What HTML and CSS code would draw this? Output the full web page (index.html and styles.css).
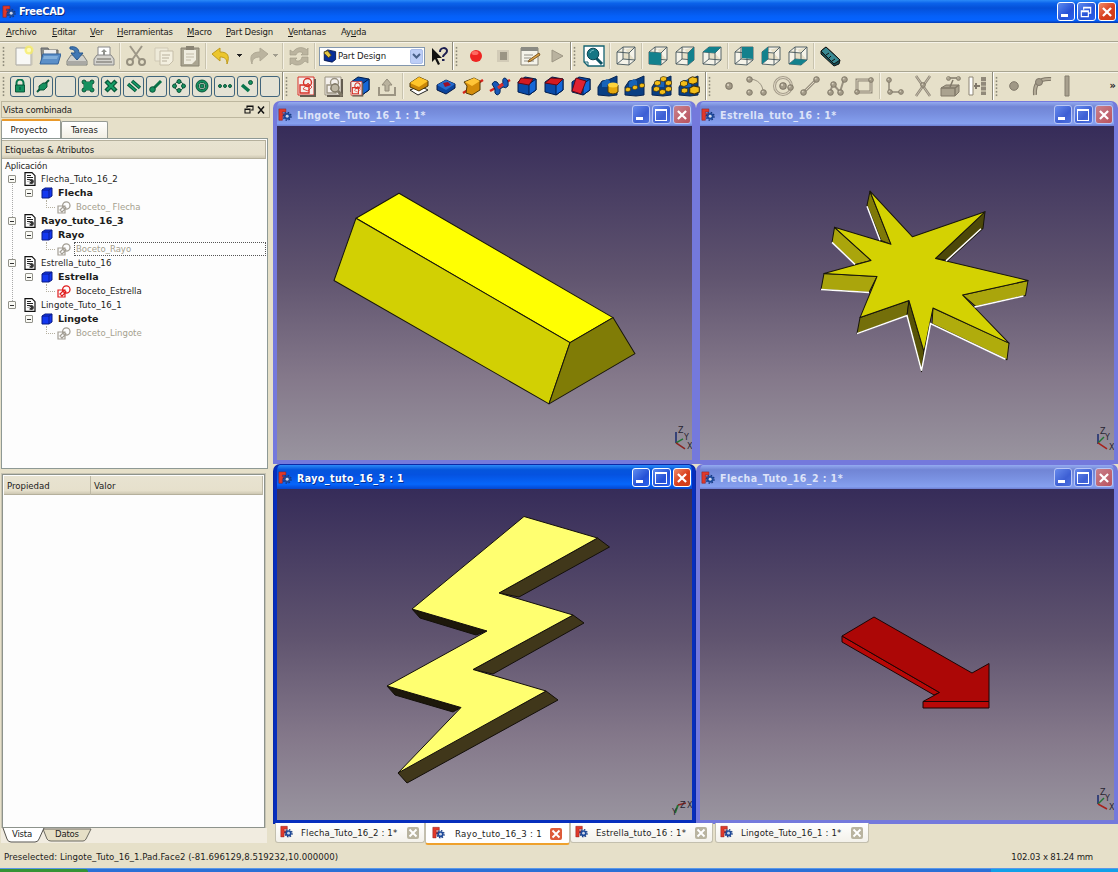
FILE: index.html
```html
<!DOCTYPE html>
<html lang="es">
<head>
<meta charset="utf-8">
<title>FreeCAD</title>
<link rel="stylesheet" href="styles.css">
</head>
<body>
<svg class="defs" width="0" height="0">
  <defs>
    <linearGradient id="sky" x1="0" y1="0" x2="0" y2="1">
      <stop offset="0" stop-color="#362c59"/><stop offset=".45" stop-color="#60546f"/><stop offset=".75" stop-color="#84788a"/><stop offset="1" stop-color="#99949f"/>
    </linearGradient>
    <symbol id="fc" viewBox="0 0 16 16"><path d="M1 1h8v3.500H5v2h3v3H5V14H1z" fill="#e0392a" stroke="#8b2020" stroke-width=".6"/><circle cx="10.500" cy="9.500" r="3.800" fill="#1c4a9c"/><circle cx="10.500" cy="9.500" r="4.400" fill="none" stroke="#173a80" stroke-width="1.600" stroke-dasharray="1.800 1.650"/><circle cx="10.500" cy="9.500" r="1.700" fill="#cdd5e8"/></symbol>
    <symbol id="wire" viewBox="0 0 22 22"><path d="M2 7 8 2h12v13l-6 5-12-1zM2 7l12 1 6-6M14 8v12M8 2v12l12 1M8 14l-6 5" fill="#fff" fill-opacity=".6" stroke="#45565b" stroke-width=".9"/></symbol>
    <symbol id="doc" viewBox="0 0 12 14"><path d="M1 .7h7l3 3v9.600H1z" fill="#fff" stroke="#111" stroke-width="1.200"/><path d="M3 3.500h4M3 5.500h6M3 7.500h3" stroke="#222"/><circle cx="7.300" cy="9.500" r="2.500" fill="#333"/><path d="M3 9.500h4M5.500 8v3" stroke="#bbb"/></symbol>
    <symbol id="box" viewBox="0 0 12 12"><path d="M1 3 4 1h7v8l-3 2H1z" fill="#1438f0" stroke="#091a83"/><path d="M1 3h7l3-2M8 3v8" fill="none" stroke="#091a83" stroke-width=".9"/></symbol>
    <symbol id="sk" viewBox="0 0 14 13"><path d="M1 5h7v7H1zM3 9l4-4 2 2-4 4z" fill="none" stroke="currentColor" stroke-width="1.200"/><circle cx="9.300" cy="4.500" r="3.700" fill="none" stroke="currentColor" stroke-width="1.300"/></symbol>
    <symbol id="solid" viewBox="0 0 22 22"><path d="M2 7 9 2l11 2v11l-7 5-11-3z" fill="#0a4ba8" stroke="#001c4c"/><path d="m13 9 7-5v11l-7 5z" fill="#1467d8" stroke="#001c4c"/></symbol>
    <symbol id="pat" viewBox="0 0 22 22"><path d="m1 12 4-6 6-1 9-4v19l-8 1-11-1z" fill="#093f83" stroke="#062454"/><path d="m5 7 5-3 3 2v6H5z" fill="#1763b8"/></symbol>
    <symbol id="sheet" viewBox="0 0 22 22"><path d="M3 2h16v18H3z" fill="#f4f0ec" stroke="currentColor"/><path d="M20 4v17H5" fill="none" stroke="#635c50" stroke-width="2"/><path d="M5 10h9v8H5z" fill="none" stroke="currentColor" stroke-width="1.400"/><path d="m8 14 5-6 4 4-4 4z" fill="none" stroke="currentColor" stroke-width=".8"/><circle cx="12.500" cy="7.500" r="4" fill="none" stroke="currentColor" stroke-width="1.400"/></symbol>
    <symbol id="dot" viewBox="0 0 6 6"><circle cx="3" cy="3" r="2.400" fill="#a39b88" stroke="#7d7565" stroke-width=".8"/><circle cx="2.300" cy="2.200" r=".8" fill="#d8d0bd"/></symbol>
    <symbol id="lemon" viewBox="0 0 8 7"><path d="m.5 2 3-1.500 4 1V5L4 6.500l-3.500-1z" fill="#f3bd17" stroke="#41310a" stroke-width=".8"/></symbol>
    <symbol id="x" viewBox="0 0 12 12"><path d="m2.500 2.500 7 7m0-7-7 7" stroke="#fff" stroke-width="1.900"/></symbol>
  </defs>
</svg>

<header class="title"><svg class="logo"><use href="#fc"/></svg><b>FreeCAD</b>
  <div class="wbtns"><i class="wb min"></i><i class="wb"><svg viewBox="0 0 12 12"><path d="M4 4V2h6v5H8M2 5h6v5H2zM2 5.800h6M4 2.500h6" fill="none" stroke="#fff" stroke-width="1"/></svg></i><i class="wb red"><svg><use href="#x"/></svg></i></div>
</header>

<nav class="menu"><span class="m1"><u>A</u>rchivo</span><span class="m2"><u>E</u>ditar</span><span class="m3"><u>V</u>er</span><span class="m4"><u>H</u>erramientas</span><span class="m5"><u>M</u>acro</span><span class="m6"><u>P</u>art Design</span><span class="m7"><u>V</u>entanas</span><span class="m8">Ay<u>u</u>da</span></nav>

<div class="bar bar1">
  <i class="grip"></i>
  <svg class="ic" viewBox="0 0 22 22"><path d="M4 3h15v17H4z" fill="#f8f8f6" stroke="#aaa9a3"/><path d="M5 20h15V6" fill="none" stroke="#c6c2b7"/><circle cx="17" cy="5" r="4.500" fill="#f7ee67" opacity=".8"/><circle cx="17" cy="5" r="2.200" fill="#fffbb8"/></svg>
  <svg class="ic" viewBox="0 0 22 22"><path d="M2 3h7l1 2h9v13H3z" fill="#8a8c88" stroke="#64676a"/><path d="M5 5h12v6H5z" fill="#eee"/><path d="M4 9h18l-3 10H1z" fill="#5b8fc8" stroke="#32629c"/><path d="M5 11h14l-1 3H4z" fill="#82afdb"/></svg>
  <svg class="ic" viewBox="0 0 22 22"><path d="m5 10-4 6v4h20v-4l-4-6z" fill="#d0d0cb" stroke="#7d7e79"/><path d="M2 16h18v3H2z" fill="#aaa9a4"/><path d="M4 2c5-1 9 1 9 6h4l-6 7-6-7h4c0-3-2-4-5-4z" fill="#4178b4" stroke="#27578e"/></svg>
  <svg class="ic" viewBox="0 0 22 22"><path d="M5 2h12v9H5z" fill="#fff" stroke="#888"/><path d="m11 4 3 3h-2v3h-2V7H8z" fill="#90928d"/><path d="m4 10-3 4v6h20v-6l-3-4z" fill="#d4d3ce" stroke="#888"/><path d="M4 14h14M3 17h16" stroke="#8d8c85" stroke-width="1.500"/></svg>
  <i class="sep"></i>
  <svg class="ic" viewBox="0 0 22 22" fill="none" stroke="#96907f"><path d="m5 1 10 14M17 1 7 15" stroke="#9d9787" stroke-width="2"/><circle cx="5" cy="17" r="3" stroke-width="2"/><circle cx="17" cy="17" r="3" stroke-width="2"/></svg>
  <svg class="ic" viewBox="0 0 22 22"><path d="M3 3h13v13H3z" fill="#eeead9" stroke="#d0c9b5"/><path d="M8 6h13v10l-4 4H8z" fill="#f3efdf" stroke="#c5bda8"/><path d="M10 10h8m-8 3h7m-7 3h5" stroke="#b7af9c"/></svg>
  <svg class="ic" viewBox="0 0 22 22"><path d="M2 3h18v18H2z" fill="#aaa592" stroke="#8a8472"/><path d="M5 5h12v14H5z" fill="#efecdf"/><path d="M7 1h8v4H7z" fill="#8a8474"/><path d="M7 9h8m-8 3h8m-8 3h5" stroke="#c2bba8"/><path d="m13 19 4-4v4z" fill="#aaa38f"/></svg>
  <i class="sep"></i>
  <svg class="ic" viewBox="0 0 22 22"><path d="m1 9 8-6v4c8 0 10 4 7 12 0-5-2-7-7-7v4z" fill="#ecc62d" stroke="#bf9b1d"/></svg>
  <i class="caret"></i>
  <svg class="ic" viewBox="0 0 22 22"><path d="m21 9-8-6v4C5 7 2 11 5 19c0-5 3-7 8-7v4z" fill="#bbb49f" stroke="#b0a995"/></svg>
  <i class="caret off"></i>
  <i class="sep"></i>
  <svg class="ic" viewBox="0 0 22 22"><path d="M2 10V5l3 2c4-6 11-5 14-2l1-2v7h-7l2-2c-3-2-6-1-7 2zm18 2v6l-3-2c-4 5-10 5-13 2l-2 2v-7h7l-2 2c3 2 6 1 7-3z" fill="#bbb49f" stroke="#a49d8a" stroke-width=".7"/></svg>
  <i class="sep"></i>
  <div class="combo"><svg viewBox="0 0 16 16"><path d="m2 4 4-3 9 2v9l-4 3-9-2z" fill="#092e99" stroke="#061747"/><path d="m2 3 4-1 4 5-3 3-5-5z" fill="#e4c542" stroke="#514212"/></svg><span>Part Design</span><i class="arrow"><svg viewBox="0 0 11 10"><path d="m2 3 3.500 3.500L9 3" fill="none" stroke="#49618a" stroke-width="2"/></svg></i></div>
  <svg class="ic" viewBox="0 0 22 22"><path d="M4 3v14l3-3 3 6 2-1-3-6h5z" fill="#111"/><path d="M12 7c0-5 7-5 7-1 0 3-4 3-4 6" fill="none" stroke="#1b1d50" stroke-width="2"/><path d="M14 14h2.500v2H14z" fill="#1b1d50"/></svg>
  <i class="brk"></i><i class="grip"></i>
  <svg class="ic" viewBox="0 0 22 22"><circle cx="11" cy="11" r="6" fill="#ee2522"/><ellipse cx="10" cy="8" rx="3.500" ry="2" fill="#ff6a62"/></svg>
  <svg class="ic" viewBox="0 0 22 22"><path d="M5 5h12v12H5z" fill="#d2cbb7"/><path d="M8 7h7v8H8z" fill="#9b9584"/></svg>
  <svg class="ic" viewBox="0 0 22 22"><path d="M2 3h17v17H2z" fill="#f5f3e9" stroke="#8b877a"/><path d="M2 2h17v4H2z" fill="#8b8b83"/><path d="M5 10h9m-9 3h7m-7 3h10" stroke="#918f86"/><path d="m10 15 10-7 1 2-9 6-3 1z" fill="#e0a647" stroke="#7d5926"/></svg>
  <svg class="ic" viewBox="0 0 22 22"><path d="m6 5 11 6-11 6z" fill="#b9b29f" stroke="#9d9684"/></svg>
  <i class="brk"></i><i class="grip"></i>
  <svg class="ic" viewBox="0 0 22 22"><path d="M1 1h20v20H5l-4-4z" fill="#fff" stroke="#146371" stroke-width="1.300"/><path d="M1 17h4v4" fill="none" stroke="#146371"/><path d="m13 13 6 6" stroke="#0b5263" stroke-width="3"/><circle cx="10" cy="9" r="5.800" fill="#167684" stroke="#0b4653"/><path d="M7 8q1-3 4-3" fill="none" stroke="#79bfc7"/></svg>
  <i class="sep"></i><svg class="ic"><use href="#wire"/></svg><i class="sep"></i>
  <svg class="ic" viewBox="0 0 22 22"><use href="#wire"/><path d="m2 7 12 1v12L2 19z" fill="#13818d"/></svg>
  <svg class="ic" viewBox="0 0 22 22"><use href="#wire"/><path d="m14 8 6-6v13l-6 5z" fill="#13818d"/></svg>
  <svg class="ic" viewBox="0 0 22 22"><use href="#wire"/><path d="m2 7 6-5h12l-6 6z" fill="#13818d"/></svg>
  <i class="sep"></i>
  <svg class="ic" viewBox="0 0 22 22"><use href="#wire"/><path d="M9 2h11v12l-11-1z" fill="#13818d"/></svg>
  <svg class="ic" viewBox="0 0 22 22"><use href="#wire"/><path d="m2 7 6-5v12l-6 5z" fill="#13818d"/></svg>
  <svg class="ic" viewBox="0 0 22 22"><use href="#wire"/><path d="m8 14 12 1-6 5-12-1z" fill="#13818d"/></svg>
  <i class="sep"></i>
  <svg class="ic" viewBox="0 0 22 22"><path d="m2 6 5-4 14 13-1 4-5 2L2 9z" fill="#164e55" stroke="#111"/><path d="m2 6 5-4 14 13-6 4z" fill="#3a8992" stroke="#111"/><path d="m7 10 3-2m0 5 2-2m1 5 3-2" stroke="#111"/></svg>
</div>

<div class="bar bar2">
  <i class="grip"></i>
  <div class="checks">
    <i><svg viewBox="0 0 14 14"><path d="M3.500 6V4a3.500 3.500 0 0 1 7 0v2" fill="none" stroke="#08764c" stroke-width="2"/><path d="M2.500 6h9v7h-9z"/><path d="M7 8v3" stroke="#043"/></svg></i>
    <i><svg viewBox="0 0 14 14"><path d="m1 13 12-12" stroke="#075a3b" stroke-width="2"/><path d="M3 11V7l4-3h4v4l-3 3z"/></svg></i>
    <i></i>
    <i><svg viewBox="0 0 14 14"><path d="M3 3h8v8H3z"/><circle cx="3" cy="3" r="2"/><circle cx="11" cy="3" r="2"/><circle cx="3" cy="11" r="2"/><circle cx="11" cy="11" r="2"/><path d="M3 3h8v8H3z" stroke="none"/></svg></i>
    <i><svg viewBox="0 0 14 14"><path d="m2 2 10 10m0-10L2 12" stroke="#075a3b" stroke-width="4.500"/><path d="m3 3 8 8m0-8-8 8" stroke="#17a068" stroke-width="2"/></svg></i>
    <i><svg viewBox="0 0 14 14"><path d="m1 5 8 7M5 2l8 7" stroke="#075a3b" stroke-width="3.600"/><path d="m1.500 5.500 7 6m-3-9 7 6" stroke="#16a06d" stroke-width="1.600"/></svg></i>
    <i><svg viewBox="0 0 14 14"><path d="m3 11 9-9" stroke="#087247" stroke-width="3"/><circle cx="3.500" cy="10.500" r="2.800"/></svg></i>
    <i><svg viewBox="0 0 14 14"><circle cx="7" cy="7" r="4.500" class="ring"/><circle cx="7" cy="2.500" r="2"/><circle cx="7" cy="11.500" r="2"/><circle cx="2.500" cy="7" r="2"/><circle cx="11.500" cy="7" r="2"/></svg></i>
    <i><svg viewBox="0 0 14 14"><circle cx="7" cy="7" r="6"/><circle cx="7" cy="7" r="3.600" class="hole"/><circle cx="7" cy="7" r="2"/></svg></i>
    <i><svg viewBox="0 0 14 14"><circle cx="2" cy="7" r="1.500"/><circle cx="7" cy="7" r="1.500"/><circle cx="12" cy="7" r="1.500"/></svg></i>
    <i><svg viewBox="0 0 14 14"><path d="m2 6 7 6" stroke="#08764c" stroke-width="3.500"/><circle cx="10.500" cy="3.500" r="2"/></svg></i>
    <i></i>
  </div>
  <i class="brk"></i><i class="grip"></i>
  <svg class="ic red-i"><use href="#sheet"/></svg>
  <svg class="ic gray-i" viewBox="0 0 22 22"><use href="#sheet"/><circle cx="13" cy="13" r="4" fill="#bdb6a3" stroke="#807967" stroke-width="1.500"/><path d="m16 16 4 5" stroke="#807967" stroke-width="3"/></svg>
  <svg class="ic red-i" viewBox="0 0 22 22"><use href="#solid"/><g transform="translate(0 5) scale(.68 .76)"><use href="#sheet" width="22" height="22"/></g></svg>
  <svg class="ic" viewBox="0 0 22 22"><path d="M3 12v8h16v-8" fill="none" stroke="#9c9583" stroke-width="2"/><path d="m11 4 5 6h-3v6H9v-6H6z" fill="#b9b29e" stroke="#928b7a"/></svg>
  <i class="sep"></i>
  <svg class="ic" viewBox="0 0 22 22"><path d="m2 15 8 5 10-5-8-4z" fill="#fff" stroke="#222"/><path d="m2 8 9-6 9 4v5l-9 5-9-4z" fill="#c98608" stroke="#4a3507"/><path d="m2 8 9-6 9 4-9 6z" fill="#ffc52a"/></svg>
  <svg class="ic" viewBox="0 0 22 22"><path d="m2 10 9-5 9 4v4l-9 6-9-4z" fill="#0b459e" stroke="#081b47"/><path d="m2 10 9-5 9 4-9 6z" fill="#246bcd"/><path d="m8 8 5-1 3 3-6 2z" fill="#9b102a"/></svg>
  <svg class="ic" viewBox="0 0 22 22"><path d="m1 18 5-3m10-7 5-3" stroke="#d6231b" stroke-width="2.500"/><path d="m2 7 10-4 6 3v9l-8 5-6-2 1-7z" fill="#d48d0a" stroke="#523b0b"/><path d="m3 7 9-4 6 3-8 5z" fill="#ffc638"/></svg>
  <svg class="ic" viewBox="0 0 22 22"><path d="m1 16 20-11" stroke="#d6231b" stroke-width="2.500"/><path d="M3 9q2-4 5-2l3 4 3-3q-1-5 2-5 4 2 3 8-2 3-5 1l-3 2q1 5-3 6-3-1-2-6z" fill="#1759b9" stroke="#08295c"/><path d="m9 13 5-4" stroke="#d9302b" stroke-width="3"/></svg>
  <svg class="ic" viewBox="0 0 22 22"><use href="#solid"/><path d="m2 8 3-5 12 1-4 6z" fill="#d41a20" stroke="#620913"/></svg>
  <svg class="ic" viewBox="0 0 22 22"><use href="#solid"/><path d="m2 8 6-5 12 1-6 6z" fill="#d41a20" stroke="#620913"/></svg>
  <svg class="ic" viewBox="0 0 22 22"><use href="#solid"/><path d="m6 3 10 3-5 13-9-3z" fill="#e12231" stroke="#620913"/></svg>
  <svg class="ic" viewBox="0 0 22 22"><use href="#pat"/><path d="M11 10h10v7q-5 4-10 0z" fill="#e6a80c" stroke="#4d3908"/><ellipse cx="16" cy="10" rx="5" ry="2.500" fill="#ffd43c"/></svg>
  <svg class="ic" viewBox="0 0 22 22"><use href="#pat"/><use href="#lemon" x="1" y="12" width="6" height="5"/><use href="#lemon" x="8" y="10" width="6" height="5"/><use href="#lemon" x="15" y="8" width="6" height="5"/></svg>
  <svg class="ic" viewBox="0 0 22 22"><use href="#pat"/><use href="#lemon" x="3" y="5" width="7" height="6"/><use href="#lemon" x="9" y="1" width="7" height="6"/><use href="#lemon" x="14" y="5" width="7" height="6"/><use href="#lemon" x="14" y="11" width="7" height="6"/><use href="#lemon" x="8" y="14" width="7" height="6"/><use href="#lemon" x="2" y="11" width="7" height="6"/></svg>
  <svg class="ic" viewBox="0 0 22 22"><use href="#pat"/><use href="#lemon" x="2" y="5" width="8" height="7"/><use href="#lemon" x="10" y="1" width="10" height="9"/><use href="#lemon" x="11" y="10" width="11" height="10"/><use href="#lemon" x="3" y="12" width="7" height="7"/></svg>
  <i class="brk w4"></i><i class="grip"></i>
  <svg class="ic" viewBox="0 0 22 22"><use href="#dot" x="7" y="7" width="8" height="8"/></svg>
  <svg class="ic" viewBox="0 0 22 22"><path d="M4 4c9 0 14 6 14 13" fill="none" stroke="#9c9584"/><use href="#dot" x="1" y="1" width="7" height="7"/><use href="#dot" x="1" y="14" width="7" height="7"/><use href="#dot" x="15" y="14" width="7" height="7"/></svg>
  <svg class="ic" viewBox="0 0 22 22"><circle cx="11" cy="11" r="8.500" fill="none" stroke="#a59d8b" stroke-width="3"/><circle cx="11" cy="11" r="8.500" fill="none" stroke="#e4dcc8"/><use href="#dot" x="7" y="7" width="8" height="8"/><use href="#dot" x="15" y="9" width="7" height="7"/></svg>
  <svg class="ic" viewBox="0 0 22 22"><path d="M4 18 18 4" stroke="#999180" stroke-width="3"/><path d="M4 18 18 4" stroke="#ddd5c0"/><use href="#dot" x="1" y="14" width="7" height="7"/><use href="#dot" x="14" y="1" width="7" height="7"/></svg>
  <svg class="ic" viewBox="0 0 22 22"><path d="m4 17 3-8 7 8 4-13" fill="none" stroke="#999180" stroke-width="2"/><use href="#dot" x="1" y="14" width="7" height="7"/><use href="#dot" x="4" y="6" width="7" height="7"/><use href="#dot" x="11" y="14" width="7" height="7"/><use href="#dot" x="15" y="1" width="7" height="7"/></svg>
  <svg class="ic" viewBox="0 0 22 22"><path d="M4 5h14v12H4z" fill="none" stroke="#91897a" stroke-width="3"/><path d="M4 5h14v12H4z" fill="none" stroke="#d5cdb8"/><use href="#dot" x="1" y="14" width="6" height="6"/><use href="#dot" x="15" y="2" width="6" height="6"/></svg>
  <i class="sep"></i>
  <svg class="ic" viewBox="0 0 22 22"><path d="M4 4v13h13" fill="none" stroke="#91897a" stroke-width="1.500"/><use href="#dot" x="1" y="2" width="6" height="6"/><use href="#dot" x="2" y="14" width="6" height="6"/><use href="#dot" x="12" y="14" width="8" height="6"/></svg>
  <svg class="ic" viewBox="0 0 22 22"><path d="m4 1 14 20M18 1 4 21" stroke="#91897a" stroke-width="2.500"/><path d="m4 1 14 20M18 1 4 21" stroke="#d9d0bb" stroke-width=".7"/><use href="#dot" x="8" y="7" width="6" height="6"/></svg>
  <svg class="ic" viewBox="0 0 22 22"><path d="m2 13 5-3h13v7l-4 4H2z" fill="#aaa28f" stroke="#817969"/><path d="M2 13h14v8m0-8 4-3M9 3h11M11 12l3-7" fill="none" stroke="#817969" stroke-width="1.500"/><use href="#dot" x="7" y="1" width="5" height="5"/><use href="#dot" x="17" y="1" width="5" height="5"/></svg>
  <svg class="ic" viewBox="0 0 22 22"><path d="M3 2h4v18H3z" fill="#fff" stroke="#8d8575"/><path d="M8 11h6m-4-3v6" stroke="#80786a" stroke-width="2"/><path d="M17.500 2v18" stroke="#91897a" stroke-width="5" stroke-dasharray="4 .8"/></svg>
  <i class="brk w3"></i><i class="grip"></i>
  <svg class="ic" viewBox="0 0 22 22"><circle cx="9" cy="11" r="4.300" fill="#a09886" stroke="#80786a"/></svg>
  <svg class="ic" viewBox="0 0 22 22"><path d="M3 20C2 9 7 3 19 4" fill="none" stroke="#817969" stroke-width="4"/><path d="M3 20C2 9 7 3 19 4" fill="none" stroke="#b4ac98" stroke-width="2"/><circle cx="7" cy="7" r="3.500" fill="#a09886" stroke="#80786a"/></svg>
  <svg class="ic" viewBox="0 0 22 22"><path d="M6 1h4v20H6z" fill="#a8a08e" stroke="#857e6e"/></svg>
  <b class="more">»</b>
</div>

<main class="work">
  <aside class="dock">
    <div class="dhead"><span>Vista combinada</span><svg viewBox="0 0 24 10"><path d="M4 3V1h6v4H8M2 4h5v4H2zM2 4.500h5M4 1.500h6" fill="none" stroke="#111" stroke-width="1.100"/><path d="m15 1.500 6 7m0-7-6 7" stroke="#111" stroke-width="1.500"/></svg></div>
    <div class="dtabs"><span class="on">Proyecto</span><span>Tareas</span></div>
    <div class="panel">
      <div class="phead">Etiquetas &amp; Atributos</div>
      <div class="tree">
        <div class="app">Aplicación</div>
        <div class="branch">
          <div class="row"><i class="ex"></i><svg class="d"><use href="#doc"/></svg><span>Flecha_Tuto_16_2</span></div>
          <div class="row l2"><i class="ex"></i><svg class="c"><use href="#box"/></svg><b>Flecha</b></div>
          <div class="row l3"><i class="el"></i><svg class="s"><use href="#sk"/></svg><span class="leaf">Boceto_ Flecha</span></div>
          <div class="row"><i class="ex"></i><svg class="d"><use href="#doc"/></svg><b>Rayo_tuto_16_3</b></div>
          <div class="row l2"><i class="ex"></i><svg class="c"><use href="#box"/></svg><b>Rayo</b></div>
          <div class="row l3"><i class="el"></i><svg class="s"><use href="#sk"/></svg><span class="leaf focus">Boceto_Rayo</span></div>
          <div class="row"><i class="ex"></i><svg class="d"><use href="#doc"/></svg><span>Estrella_tuto_16</span></div>
          <div class="row l2"><i class="ex"></i><svg class="c"><use href="#box"/></svg><b>Estrella</b></div>
          <div class="row l3 vis"><i class="el"></i><svg class="s"><use href="#sk"/></svg><span class="leaf">Boceto_Estrella</span></div>
          <div class="row"><i class="ex"></i><svg class="d"><use href="#doc"/></svg><span>Lingote_Tuto_16_1</span></div>
          <div class="row l2"><i class="ex"></i><svg class="c"><use href="#box"/></svg><b>Lingote</b></div>
          <div class="row l3"><i class="el"></i><svg class="s"><use href="#sk"/></svg><span class="leaf">Boceto_Lingote</span></div>
        </div>
      </div>
    </div>
    <div class="props"><div class="prh"><span>Propiedad</span><span>Valor</span></div></div>
    <div class="btabs"><svg viewBox="0 0 100 18"><path d="M42 1h48l-5 10q-1 2-3 2H50q-3 0-4-2z" fill="#e6dfc6" stroke="#6d6b62"/><path d="m2 0 4 11q1 3 4 3h24q3 0 4-3l5-11" fill="#fff" stroke="#55534d"/></svg><span class="v">Vista</span><span class="dd">Datos</span></div>
  </aside>

  <section class="mdi">
    <article class="win"><div class="wt"><svg class="logo"><use href="#fc"/></svg><b>Lingote_Tuto_16_1 : 1*</b><div class="wbtns"><i class="wb min"></i><i class="wb max"></i><i class="wb red"><svg><use href="#x"/></svg></i></div></div>
      <svg class="scene" viewBox="277 127 415 333" preserveAspectRatio="none"><path d="M277 127h415v333H277z" fill="url(#sky)"/>
        <g stroke="#17150a" stroke-linejoin="round"><path d="m399 194 214 124-43 25-214-124z" fill="#ffff02"/><path d="m356 219 214 124-21 61-215-123z" fill="#d2d003"/><path d="m570 343 43-25 22 36-86 50z" fill="#807c06"/></g>
        <g class="axis"><path d="M676 432v11" stroke="#172a6e"/><path d="m676 443 7-4" stroke="#217533"/><path d="m676 443 9 6" stroke="#8a2420"/><text x="678" y="433">Z</text><text x="684" y="440">Y</text><text x="687" y="449">X</text></g></svg></article>
    <article class="win"><div class="wt"><svg class="logo"><use href="#fc"/></svg><b>Estrella_tuto_16 : 1*</b><div class="wbtns"><i class="wb min"></i><i class="wb max"></i><i class="wb red"><svg><use href="#x"/></svg></i></div></div>
      <svg class="scene" viewBox="700 127 414 333" preserveAspectRatio="none"><path d="M700 127h414v333H700z" fill="url(#sky)"/>
        <g stroke="#17150a" stroke-linejoin="round"><path d="m870 192 21 53-10-4-14-35z" fill="#7f7908"/><path d="m834.500 228 36.500 33-16 4-23-22z" fill="#aaa50c"/><path d="m824 274 53 3-8 16-48-3z" fill="#aaa50c"/><path d="m860 318 49-17-2 15-50 18z" fill="#746f0a"/><path d="m909 301 15 51-2.500 20L907 316z" fill="#575306"/><path d="m933 308.500 76 35-2 16.500-75-36z" fill="#b0ac0c"/><path d="m962.500 295.500 65.500-14.500-2.500 15-49.500 11z" fill="#aaa50c"/><path d="m985 212.500-49.500 46.500 12.500 2 35-32z" fill="#4d4809"/>
        <path d="m870 192 42.500 45.500L985 212.500 935.500 259l92.500 22-65.500 14.500 46.500 48-76-35L924 352l-15-51-49 17 17-41-53-3 47-13-36.500-33L891 245z" fill="#d4d202"/></g>
        <path d="m867 207 13 34m-48 2 23 22m-34 25 48 3m-12 41 50-18 14.500 55 9-47 75 35.500m-31-52 49-11m-77.500-35 35-32" fill="none" stroke="#fff" stroke-width="1.500"/>
        <g class="axis"><path d="M1098 434v10" stroke="#172a6e"/><path d="m1098 443 6-6" stroke="#217533"/><path d="m1098 443 9 6" stroke="#a8201a"/><text x="1100" y="434">Z</text><text x="1105" y="440">Y</text><text x="1109" y="450">X</text></g></svg></article>
    <article class="win active"><div class="wt"><svg class="logo"><use href="#fc"/></svg><b>Rayo_tuto_16_3 : 1</b><div class="wbtns"><i class="wb min"></i><i class="wb max"></i><i class="wb red"><svg><use href="#x"/></svg></i></div></div>
      <svg class="scene" viewBox="277 489 415 331" preserveAspectRatio="none"><path d="M277 489h415v331H277z" fill="url(#sky)"/>
        <g stroke="#130f0a" stroke-linejoin="round"><path d="m597.500 538 12 9-90.500 50-20-4zM573 615l11 8-91 51-20-4.500zM546 691l12 9-151 83-9-10 7-5z" fill="#40371a"/><path d="m412 609 8 9 56 17 11-4zM387 686l8 9 58 17 8-4.500z" fill="#1d180b"/><path d="m524 516.500 73.500 21.500-98.500 55 74 22-100 54.500 73 21.500-148 82 63-65.500-74-21.500 100-55-75-22z" fill="#ffff70"/></g>
        <g class="axis"><path d="m675 813 3-8" stroke="#217533" stroke-width="2"/><path d="m678 805 8-2" stroke="#8a2420"/><text x="680" y="808">Z</text><text x="672" y="815">Y</text><text x="687" y="808">X</text></g></svg></article>
    <article class="win"><div class="wt"><svg class="logo"><use href="#fc"/></svg><b>Flecha_Tuto_16_2 : 1*</b><div class="wbtns"><i class="wb min"></i><i class="wb max"></i><i class="wb red"><svg><use href="#x"/></svg></i></div></div>
      <svg class="scene" viewBox="700 489 414 331" preserveAspectRatio="none"><path d="M700 489h414v331H700z" fill="url(#sky)"/>
        <g stroke="#1d0504" stroke-linejoin="round"><path d="m842 636 97.500 56.500-5.500 2.500-92-53zM923 701.500h66v6.500h-66z" fill="#b80807"/><path d="m874 617 98 56 17-9.500v38h-66l16.500-9L842 636z" fill="#ac0706"/></g>
        <g class="axis"><path d="M1098 795v9" stroke="#172a6e"/><path d="m1098 804 6-6" stroke="#217533"/><path d="m1098 804 9 5" stroke="#a8201a"/><text x="1100" y="795">Z</text><text x="1105" y="801">Y</text><text x="1109" y="810">X</text></g></svg></article>
    <div class="mtabs">
      <div class="mt t1"><svg class="logo"><use href="#fc"/></svg><span>Flecha_Tuto_16_2 : 1*</span><i class="cl"><svg><use href="#x"/></svg></i></div>
      <div class="mt t2 on"><svg class="logo"><use href="#fc"/></svg><span>Rayo_tuto_16_3 : 1</span><i class="cl"><svg><use href="#x"/></svg></i></div>
      <div class="mt t3"><svg class="logo"><use href="#fc"/></svg><span>Estrella_tuto_16 : 1*</span><i class="cl"><svg><use href="#x"/></svg></i></div>
      <div class="mt t4"><svg class="logo"><use href="#fc"/></svg><span>Lingote_Tuto_16_1 : 1*</span><i class="cl"><svg><use href="#x"/></svg></i></div>
    </div>
  </section>
</main>
<footer class="status"><span>Preselected: Lingote_Tuto_16_1.Pad.Face2 (-81.696129,8.519232,10.000000)</span><span class="dim">102.03 x 81.24 mm</span></footer>
<div class="task"><i></i><i></i><i></i></div>
</body>
</html>
```
FILE: styles.css
```css
* { box-sizing: border-box; }
body { margin: 0; width: 1118px; height: 872px; overflow: hidden; display: flex; flex-direction: column; background: #e6e0c9; color: #1c1c1a; font: 9.500px/14px "DejaVu Sans Condensed", "DejaVu Sans", sans-serif; white-space: nowrap; }
i { font-style: normal; flex: none; }
svg { flex: none; display: block; }
.defs { position: absolute; }

.title { height: 23px; flex: none; display: flex; align-items: center; padding: 0 2px 0 2px; color: #fff; background: linear-gradient(#2a8af8 0, #0b62ea 14%, #0450d8 35%, #0560f8 70%, #0563ff 88%, #0338ae 100%); }
.title b { font-size: 11px; margin-left: 3px; letter-spacing: -.3px; text-shadow: 1px 1px #0a2a80; }
.logo { width: 14px; height: 14px; }
.wbtns { margin-left: auto; display: flex; gap: 2px; }
.wb { width: 18.500px; height: 19px; border: 1px solid #fff; border-radius: 3px; background: linear-gradient(135deg, #5f8cf0, #2450d6 60%, #2a63ee); display: grid; place-items: center; }
.wb svg { width: 14px; height: 14px; }
.wb.red { background: linear-gradient(135deg, #ef8a68, #d83e1c 55%, #cf3d16); }
.wb.min::after { content: ""; width: 7px; height: 3px; background: #fff; margin: 8px 3px 0 0; }
.wb.max::after { content: ""; width: 10px; height: 9px; border: 1px solid #fff; border-top-width: 2px; }

.menu { height: 18px; flex: none; display: flex; gap: 14px; padding: 0 0 1px 6px; align-items: center; letter-spacing: -.2px; }
.m1 { width: 32px; } .m2 { width: 24px; } .m3 { width: 13px; } .m4 { width: 56px; } .m5 { width: 25px; } .m6 { width: 48px; } .m7 { width: 39px; } .m8 { width: 27px; }

.bar { flex: none; display: flex; align-items: center; border-top: 1px solid #a9a591; box-shadow: inset 0 1px #f6f3e8; }
.bar1 { height: 30px; padding-bottom: 1px; }
.bar2 { height: 29px; }
.grip { width: 9px; height: 21px; background: radial-gradient(circle, #8b8878 .8px, transparent 1.200px) 1px 0 / 5px 3.500px repeat-y; }
.ic { width: 22px; height: 22px; margin: 0 2.500px; }
.sep { width: 5px; height: 26px; background: linear-gradient(90deg, transparent 2px, #c8c3ae 2px, #c8c3ae 3px, #f5f1e4 3px, #f5f1e4 4px, transparent 4px); }
.brk { width: 2px; height: 28px; border-left: 1px solid #8e8b7c; border-right: 1px solid #fff; margin-right: -1px; }
.w4 { margin-left: 3px; } .w3 { margin-left: 2px; }
.caret { width: 9px; height: 10px; background: linear-gradient(#222, #222) 2px 3px / 5px 1px no-repeat, linear-gradient(#222, #222) 3px 4px / 3px 1px no-repeat, linear-gradient(#222, #222) 4px 5px / 1px 1px no-repeat; }
.off { opacity: .35; }
.combo { width: 106px; height: 19px; margin-left: 2px; border: 1px solid #8397ae; background: #fff; display: flex; align-items: center; padding: 0 1px; }
.combo > svg { width: 15px; height: 14px; margin: 0 1px 0 1px; }
.combo span { flex: 1; letter-spacing: -.1px; }
.arrow { width: 13px; height: 15px; background: #bccdf6; border: 1px solid #aabde8; border-radius: 2px; display: grid; place-items: center; }
.arrow svg { width: 11px; height: 10px; }
.checks { display: flex; gap: 2px; width: 272px; margin-left: 1px; }
.checks i { width: 20.700px; height: 21px; border: 1px solid #41657c; border-radius: 3px; background: #e4e2d4; display: grid; place-items: center; }
.checks svg { width: 14px; height: 14px; fill: #15915f; stroke: #064c32; stroke-width: .9; }
.checks .hole { fill: #e4e2d4; }
.checks .ring { fill: none; }
.red-i { color: #d63026; } .gray-i { color: #9a9381; }
.more { margin: 0 2px 0 auto; font-size: 11px; }

.work { flex: none; height: 744px; display: flex; }
.dock { width: 273px; flex: none; padding: 1px 5px 0 1px; display: flex; flex-direction: column; }
.dhead { width: 269px; height: 17px; border: 1px solid #bdb79f; display: flex; align-items: center; padding: 0 2px 0 1px; }
.dhead span { flex: 1; letter-spacing: -.15px; }
.dhead svg { width: 24px; height: 10px; }
.dtabs { display: flex; height: 19px; margin-top: 1px; align-items: flex-end; text-align: center; }
.dtabs span { width: 47px; height: 17px; line-height: 16px; background: linear-gradient(#fff, #f2efe4); border: 1px solid #969b94; border-bottom: 0; border-radius: 2px 2px 0 0; }
.dtabs .on { width: 60px; height: 19px; line-height: 17px; background: #fff; border-top: 2px solid #e9992b; padding-right: 4px; }
.panel { width: 267px; height: 331px; border: 1px solid #8e9995; background: #fdfdfd; padding: 1px 1px 0 0; }
.phead { height: 19px; line-height: 17px; padding-left: 3px; background: linear-gradient(#e8e3d1, #e6e0cc 80%, #cec8b3); border: solid #b5b09c; border-width: 1px 1px 1px 0; letter-spacing: -.1px; }
.app { height: 13px; padding-left: 3px; letter-spacing: -.15px; }
.branch { background: repeating-linear-gradient(#aaa 0 1px, transparent 1px 2px) 10px 8px / 1px 124px no-repeat; }
.row { height: 14px; display: flex; align-items: center; padding-left: 6px; }
.row > span { letter-spacing: .12px; }
.row.l2 { padding-left: 23px; } .row.l3 { padding-left: 44px; }
.ex { width: 8px; height: 8px; border: 1px solid #92928a; border-radius: 1px; background: linear-gradient(#333, #333) 1px 2.500px / 4px 1px no-repeat #fafaf5; }
.ex + svg { margin-left: 8px; }
.d { width: 12px; height: 14px; margin-right: 5px; }
.l2 .ex + svg { margin-left: 8px; }
.c { width: 12px; height: 12px; margin-right: 5px; }
.el { width: 9px; height: 8px; border: dotted #b5b0a0; border-width: 0 0 1px 1px; margin-top: -7px; }
.s { width: 14px; height: 13px; margin: 0 3px 0 2px; color: #a39e94; }
.row .leaf { color: #a5a18f; height: 14px; padding: 0 2px; letter-spacing: 0; }
.row .focus { flex: 1; border: 1px dotted #555; line-height: 12px; padding: 0 1px; }
.vis .s { color: #e01b1b; } .row.vis .leaf { color: #1c1c1a; }
.row b { font: bold 9.500px/14px "DejaVu Sans", sans-serif; }
.props { width: 263px; height: 354px; margin: 5px 0 0 1px; border: 1px solid #8d938c; background: #fdfdfd; outline: 1px solid #c7c3b2; padding: 1px; }
.prh { height: 19px; line-height: 19px; display: grid; grid-template-columns: 87px 1fr; background: linear-gradient(#e8e3d1, #e6e0cc 80%, #cec8b3); border-bottom: 1px solid #b5b09c; }
.prh span { padding-left: 3px; border-right: 1px solid #bdb8a5; }
.btabs { width: 266px; height: 15px; background: #f1ece0; display: flex; position: relative; }
.btabs svg { position: absolute; left: 0; top: 0; width: 100px; height: 18px; }
.btabs span { position: relative; line-height: 12px; letter-spacing: -.2px; }
.v { margin-left: 11px; width: 43px; }

.mdi { width: 845px; display: grid; grid-template-columns: 421px 420px; grid-template-rows: 363px 360px 21px; column-gap: 2px; padding-left: 1px; }
.win { border: 3px solid #7479dc; border-top: 0; border-radius: 6px 6px 0 0; background: #7c83df; display: flex; flex-direction: column; overflow: hidden; margin-top: 2px; box-shadow: 0 0 0 1px #7479dc; }
.wt { height: 24px; margin: 0 -3px; flex: none; display: flex; align-items: center; padding: 1px 4px 0 4px; color: #dde3f8; background: linear-gradient(#94abf1, #7185d5 20%, #788fdf 50%, #85a0ef 90%, #6c7ed3); }
.wt b { font: bold 10.500px/14px "DejaVu Sans Condensed", sans-serif; margin-left: 5px; letter-spacing: .45px; }
.scene { width: 100%; flex: 1; min-height: 0; }
.active { border-color: #062ebd; background: #062ebd; box-shadow: 0 0 0 1px #0a2aa8; }
.active .wt { color: #fff; background: linear-gradient(#2c8bf7, #0555dc 20%, #0552e0 40%, #0666fb 80%, #0546cf); text-shadow: 1px 1px #063094; }
.win:not(.active) .wb { background: linear-gradient(135deg, #678aec, #3d5fd4 60%, #4c70df); border-color: #bac7f6; }
.win:not(.active) .wb.red { background: linear-gradient(135deg, #c9818c, #b9525d); }
.axis { fill: none; stroke-width: 1.500; }
.axis text { font: 8px "DejaVu Sans", sans-serif; fill: #282431; }
.mtabs { grid-column: 1 / 3; display: flex; padding-left: 1px; align-items: flex-start; }
.mt { height: 20px; display: flex; align-items: center; padding: 1px 5px 0 4px; background: linear-gradient(#fff, #f3f1ea); border: 1px solid #c3bfae; border-top: 0; border-radius: 0 0 3px 3px; }
.mt span { margin-left: 8px; letter-spacing: .17px; }
.mt .logo { width: 13px; margin-top: -2px; }
.cl { width: 12px; height: 12px; margin-left: auto; background: #b9b4a0; border-radius: 2px; }
.cl svg { width: 12px; height: 12px; }
.t1 { width: 150px; } .t2 { width: 145px; } .t3 { width: 143px; } .t4 { width: 154px; margin-left: 2px; }
.t2 span { margin-left: 10px; letter-spacing: .3px; }
.t2 { padding-left: 6px; padding-right: 7px; }
.mt.on { height: 22px; background: #fff; border-bottom: 2px solid #efa12c; }
.on .cl { background: #dd5b39; }

.status { height: 24px; flex: none; display: flex; justify-content: space-between; align-items: center; padding: 2px 25px 0 4px; letter-spacing: .05px; }
.dim { letter-spacing: -.15px; }
.task { flex: 1; display: flex; background: #2a70d6; border-top: 1px solid #5a98e8; }
.task i:first-child { width: 88px; background: #359335; border-radius: 0 3px 0 0; }
.task i:nth-child(2) { width: 903px; }
.task i:last-child { flex: 1; background: #12a0e8; }
```
